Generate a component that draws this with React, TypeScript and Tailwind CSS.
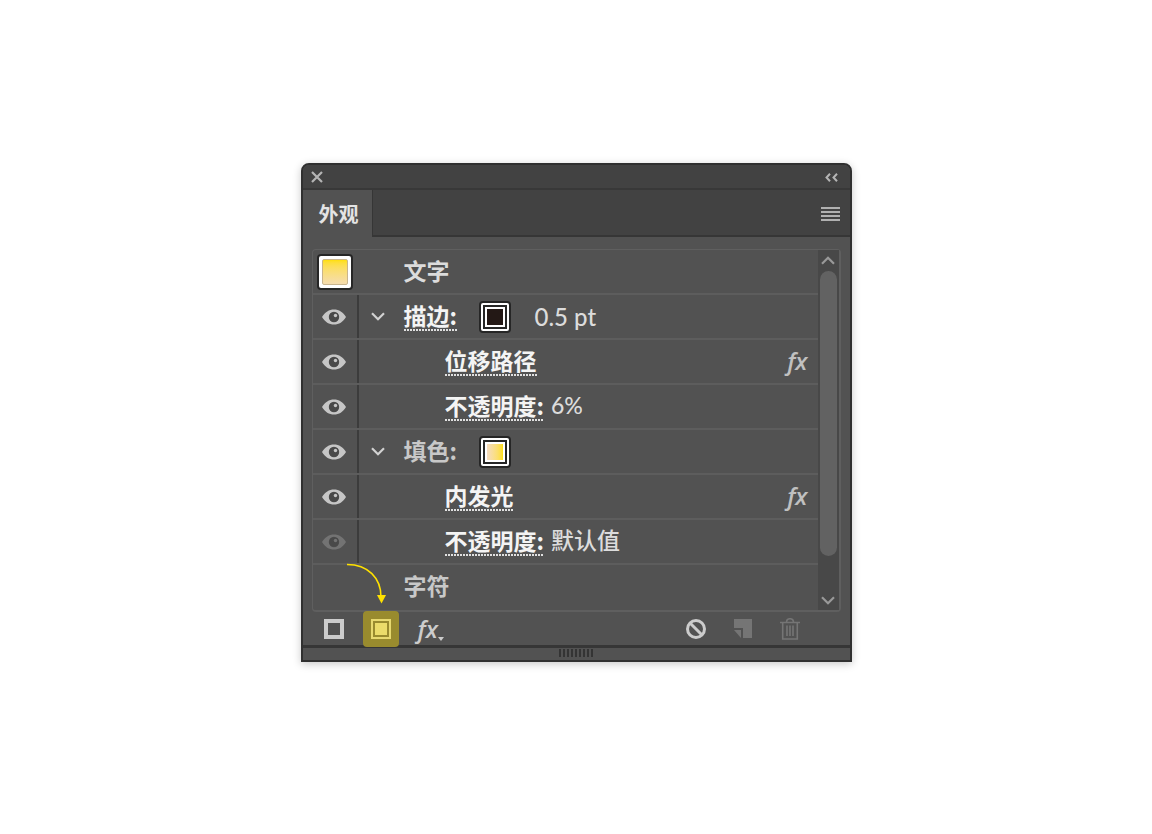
import { useState } from "react";
import type { ReactNode } from "react";
import clsx from "clsx";

interface RowProps {
  eye?: "on" | "off";
  fx?: boolean;
  children: ReactNode;
}

function EyeIcon({ className }: { className: string }) {
  return (
    <svg viewBox="0 0 24 16" className={clsx("h-4 w-6", className)} fill="currentColor" aria-hidden="true">
      <path
        fillRule="evenodd"
        d="M0 8C3 3 7 .5 12 .5S21 3 24 8c-3 5-7 7.500-12 7.500S3 13 0 8Zm12-5.200a5.200 5.200 0 1 0 0 10.400 5.200 5.200 0 0 0 0-10.400Z"
      />
      <circle cx="12" cy="8" r="4.800" fill="#494949" />
      <circle cx="13.500" cy="6.500" r="1.700" />
    </svg>
  );
}

function Chevron({ className }: { className?: string }) {
  return (
    <svg viewBox="0 0 14 9" className={clsx("h-[9px] w-[14px]", className)} fill="none" stroke="currentColor" strokeWidth="2.200" aria-hidden="true">
      <path d="M1 1.200 7 7.200l6-6" />
    </svg>
  );
}

function FxIcon({ className }: { className: string }) {
  return (
    <span className={clsx("font-['Open_Sans',sans-serif] font-semibold italic", className)}>fx</span>
  );
}

function DottedLink({ children }: { children: ReactNode }) {
  return (
    <a
      href="#"
      className="block h-7 bg-[repeating-linear-gradient(90deg,#e0e0e0_0_2px,transparent_2px_3px)] bg-[length:100%_2px] bg-bottom bg-no-repeat leading-6 font-bold text-[#f4f4f4]"
    >
      {children}
    </a>
  );
}

function Row({ eye, fx, children }: RowProps) {
  const [visible, setVisible] = useState(eye === "on");

  return (
    <li className="flex h-[45px] border-b-2 border-[#5d5d5d]">
      {eye ? (
        <div className="flex w-[46px] shrink-0 border-r-2 border-[#3c3c3c]">
          <button
            type="button"
            aria-label="切换可见性"
            aria-pressed={visible}
            onClick={() => setVisible(!visible)}
            className="flex flex-1 items-center justify-center pr-[2px]"
          >
            <EyeIcon className={visible ? "text-[#c6c6c6]" : "text-[#737373]"} />
          </button>
        </div>
      ) : null}
      {children}
      {fx && <FxIcon className="ml-auto pr-[10px] text-2xl leading-[42px] text-[#c0c0c0]" />}
    </li>
  );
}

function GroupRow({ label, swatch, value, linked }: { label: string; swatch: string; value?: string; linked?: boolean }) {
  return (
    <Row eye="on">
      <div className="flex flex-1 items-center">
        <button type="button" aria-label={`折叠${label}`} className="flex w-[45px] shrink-0 justify-start pl-3 text-[#d2d2d2]">
          <Chevron />
        </button>
        <div className="w-[75px]">
          <div className="w-fit">
            {linked ? <DottedLink>{label}:</DottedLink> : <span className="block h-7 font-bold text-[#c8c8c8]">{label}:</span>}
          </div>
        </div>
        <button type="button" aria-label={`${label}颜色`} className="size-8 rounded-sm border-2 border-[#262626] bg-white p-[2px]">
          <span className="block size-full border-2 border-[#262626] bg-white p-[2px]">
            <span className={clsx("block size-full", swatch)} />
          </span>
        </button>
        {value && <span className="pl-6 font-['Lato',sans-serif] text-2xl leading-6 font-medium">{value}</span>}
      </div>
    </Row>
  );
}

function EffectRow({ label, value, eye = "on", fx }: { label: string; value?: string; eye?: "on" | "off"; fx?: boolean }) {
  return (
    <Row eye={eye} fx={fx}>
      <div className="flex items-center gap-[7px] pl-[86px]">
        <DottedLink>{label}</DottedLink>
        {value && (
          <span className="h-7 font-['Lato','Noto_Sans_CJK_SC',sans-serif] leading-6 font-medium">{value}</span>
        )}
      </div>
    </Row>
  );
}

export default function App() {
  return (
    <main className="min-h-screen bg-white px-4 pt-[163px] pb-16 font-['Noto_Sans_CJK_SC',sans-serif]">
      <section
        aria-label="外观"
        className="mx-auto w-full max-w-[551px] rounded-t-lg border-2 border-[#303030] bg-[#525252] text-[23px] leading-6 text-[#dcdcdc] shadow-[0_2px_8px_rgba(0,0,0,0.22)]"
      >
        <header className="flex h-[25px] items-center justify-between rounded-t-md border-b-2 border-[#383838] bg-[#424242] pt-px pr-3 pl-2 text-[#b4b4b4]">
          <button type="button" aria-label="关闭">
            <svg viewBox="0 0 12 12" className="size-3" fill="none" stroke="currentColor" strokeWidth="2.200" aria-hidden="true">
              <path d="m1 1 10 10M11 1 1 11" />
            </svg>
          </button>
          <button type="button" aria-label="折叠面板">
            <svg viewBox="0 0 13 9" className="h-[9px] w-[13px]" fill="none" stroke="currentColor" strokeWidth="2" aria-hidden="true">
              <path d="M5 .7 1.500 4.500 5 8.300M12 .7 8.500 4.500 12 8.300" />
            </svg>
          </button>
        </header>

        <div className="flex h-[47px] items-stretch bg-[#424242]" role="tablist">
          <button type="button" role="tab" aria-selected="true" className="w-[69px] bg-[#525252] pr-px pt-px pl-1 text-xl font-bold text-[#e4e4e4]">
            外观
          </button>
          <div className="flex flex-1 items-center justify-end border-b-2 border-l border-[#363636] pr-[10px] pt-[2px]">
            <button type="button" aria-label="面板菜单">
              <svg viewBox="0 0 19 14" className="h-[14px] w-[19px]" fill="#b0b0b0" aria-hidden="true">
                <path d="M0 0h19v2H0zM0 4h19v2H0zM0 8h19v2H0zM0 12h19v2H0z" />
              </svg>
            </button>
          </div>
        </div>

        <div className="px-[9px] pt-3">
          <div className="flex rounded border border-r-2 border-b-2 border-[#5f5f5f]">
            <ul className="min-w-0 flex-1">
              <Row>
                <div className="flex flex-1 items-center gap-[51px] pl-1">
                  <span className="size-9 rounded-sm border-2 border-[#262626] bg-white p-[3px]">
                    <span className="block size-full rounded-xs border border-[#c9b58e] bg-linear-to-b from-[#ffdf00] to-[#f5dcae]" />
                  </span>
                  <span className="h-7 font-bold">文字</span>
                </div>
              </Row>
              <GroupRow label="描边" swatch="bg-[#231815]" value="0.5 pt" linked />
              <EffectRow label="位移路径" fx />
              <EffectRow label="不透明度:" value="6%" />
              <GroupRow label="填色" swatch="bg-linear-to-r from-[#f6dcc0] to-[#ffdf00]" />
              <EffectRow label="内发光" fx />
              <EffectRow label="不透明度:" value="默认值" eye="off" />
              <li className="h-[45px] pt-2 pl-[91px] font-bold text-[#c8c8c8]">字符</li>
            </ul>
            <div className="flex w-[21px] flex-col items-center bg-[#484848] text-[#999999]">
              <button type="button" aria-label="向上滚动" className="flex h-[21px] items-center">
                <Chevron className="rotate-180" />
              </button>
              <div className="w-[17px] flex-1 rounded-full bg-[#626262]" />
              <button type="button" aria-label="向下滚动" className="flex h-[54px] items-end pb-[5px]">
                <Chevron />
              </button>
            </div>
          </div>
        </div>

        <footer className="flex h-9 items-center border-b-3 border-[#363636] px-3 text-[#cccccc]">
          <button type="button" aria-label="添加新描边" className="flex w-[39px] justify-center">
            <span className="size-5 border-4 border-[#cccccc]" />
          </button>
          <div className="relative ml-[9px] size-9">
            <button type="button" aria-label="添加新填色" className="flex size-9 items-center justify-center rounded bg-[#998b2e]">
              <span className="size-5 border-2 border-[#e7d970] p-[2px]">
                <span className="block size-full bg-[#ebdc6a]" />
              </span>
            </button>
            <svg viewBox="0 0 40 42" className="pointer-events-none absolute -top-12 -left-4 h-[42px] w-10" fill="none" aria-hidden="true">
              <path d="M0 1.500C21 1.500 34 15 34 34" stroke="#ffe100" strokeWidth="1.500" />
              <path d="M30 32h9l-4.500 8.500z" fill="#ffe100" />
            </svg>
          </div>
          <button type="button" aria-label="添加新效果" className="ml-[19px] flex items-end">
            <FxIcon className="text-2xl leading-8" />
            <svg viewBox="0 0 6 4" className="mb-1 h-1 w-[6px]" fill="currentColor" aria-hidden="true">
              <path d="M0 0h6L3 4z" />
            </svg>
          </button>
          <div className="ml-auto flex items-center gap-7 pr-[38px]">
            <button type="button" aria-label="清除外观">
              <svg viewBox="0 0 20 20" className="size-5" fill="none" stroke="currentColor" strokeWidth="3" aria-hidden="true">
                <circle cx="10" cy="10" r="8.500" />
                <path d="m4 4 12 12" />
              </svg>
            </button>
            <button type="button" aria-label="复制所选项目" disabled>
              <svg viewBox="0 0 18 19" className="h-[19px] w-[18px]" fill="#757575" aria-hidden="true">
                <path d="M0 0h18v19H9V9H0zM0 11h7v8z" />
              </svg>
            </button>
            <button type="button" aria-label="删除所选项目" disabled>
              <svg viewBox="0 0 20 22" className="h-[22px] w-5" fill="none" stroke="#757575" strokeWidth="1.600" aria-hidden="true">
                <path d="M0 4.500h20M6.500 4.500c0-5 7-5 7 0M2.700 4.500v16.500h14.600V4.500M7 7.500v10.500M10 7.500v10.500M13 7.500v10.500" />
              </svg>
            </button>
          </div>
        </footer>
        <div className="flex h-3 items-start justify-center pt-px">
          <div className="h-2 w-[35px] bg-[repeating-linear-gradient(90deg,#343434_0_2px,transparent_2px_4px)]" />
        </div>
      </section>
    </main>
  );
}
